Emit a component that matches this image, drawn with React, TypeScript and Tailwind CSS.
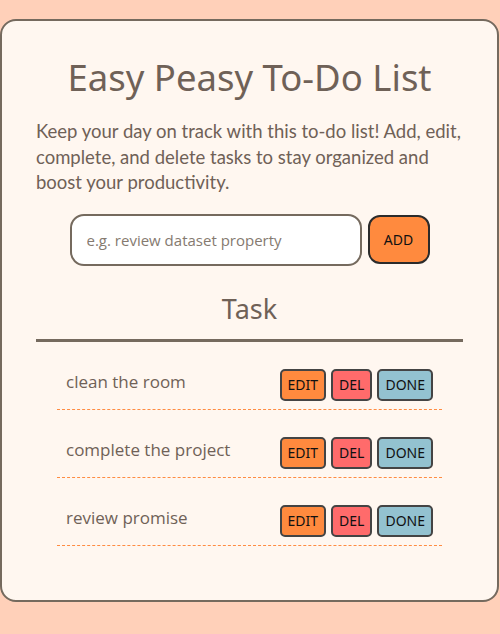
import React from "react";

const tasks = ["clean the room", "complete the project", "review promise"];

function ActionButton({ label, color }: { label: string; color: string }) {
  return (
    <button
      className={`h-[32px] px-[6px] rounded-[5px] border-2 border-[#444] text-[14px] text-[#111] font-['Noto_Sans',sans-serif] ${color}`}
    >
      {label}
    </button>
  );
}

export default function App() {
  return (
    <div className="min-h-[634px] bg-[#ffd0b9] pt-[19px] pb-[32px]">
      <div className="w-[499px] h-[583px] rounded-[16px] border-2 border-[#756a5e] bg-[#fff7f0] px-[34px] pt-[34px]">
        <h1 className="text-center text-[36.5px] leading-[44px] text-[#6f6157] font-['Noto_Sans',sans-serif]">
          Easy Peasy To-Do List
        </h1>
        <p className="mt-[20px] text-[18.5px] leading-[25.5px] text-[#6f6157] font-['Lato',sans-serif]">
          Keep your day on track with this to-do list! Add, edit, complete, and delete tasks to stay organized and boost your productivity.
        </p>
        <div className="mt-[18px] flex justify-center items-center gap-[6px]">
          <input
            className="w-[292px] h-[52px] rounded-[14px] border-2 border-[#756a5e] bg-white px-[15px] text-[15px] text-[#6f6157] placeholder:text-[#857a70] outline-none font-['Open_Sans',sans-serif]"
            placeholder="e.g. review dataset property"
          />
          <button className="w-[62px] h-[49px] rounded-[12px] border-2 border-[#2b2b2b] bg-[#ff8a3e] text-[14px] text-[#111] font-['Noto_Sans',sans-serif]">
            ADD
          </button>
        </div>
        <h2 className="mt-[27px] text-center text-[27px] leading-[32px] text-[#6f6157] font-['Noto_Sans',sans-serif]">
          Task
        </h2>
        <div className="mt-[14px] h-[3px] bg-[#756a5e]" />
        <ul className="mx-auto w-[385px]">
          {tasks.map((t) => (
            <li
              key={t}
              className="flex justify-between items-start px-[9px] pt-[27px] pb-[8px] border-b border-dashed border-[#ff8c42]"
            >
              <span className="text-[17px] leading-[25px] text-[#6f6157] font-['Open_Sans',sans-serif]">
                {t}
              </span>
              <div className="flex gap-[5px]">
                <ActionButton label="EDIT" color="bg-[#ff8a3e]" />
                <ActionButton label="DEL" color="bg-[#ff6b6b]" />
                <ActionButton label="DONE" color="bg-[#93c2d0]" />
              </div>
            </li>
          ))}
        </ul>
      </div>
    </div>
  );
}
